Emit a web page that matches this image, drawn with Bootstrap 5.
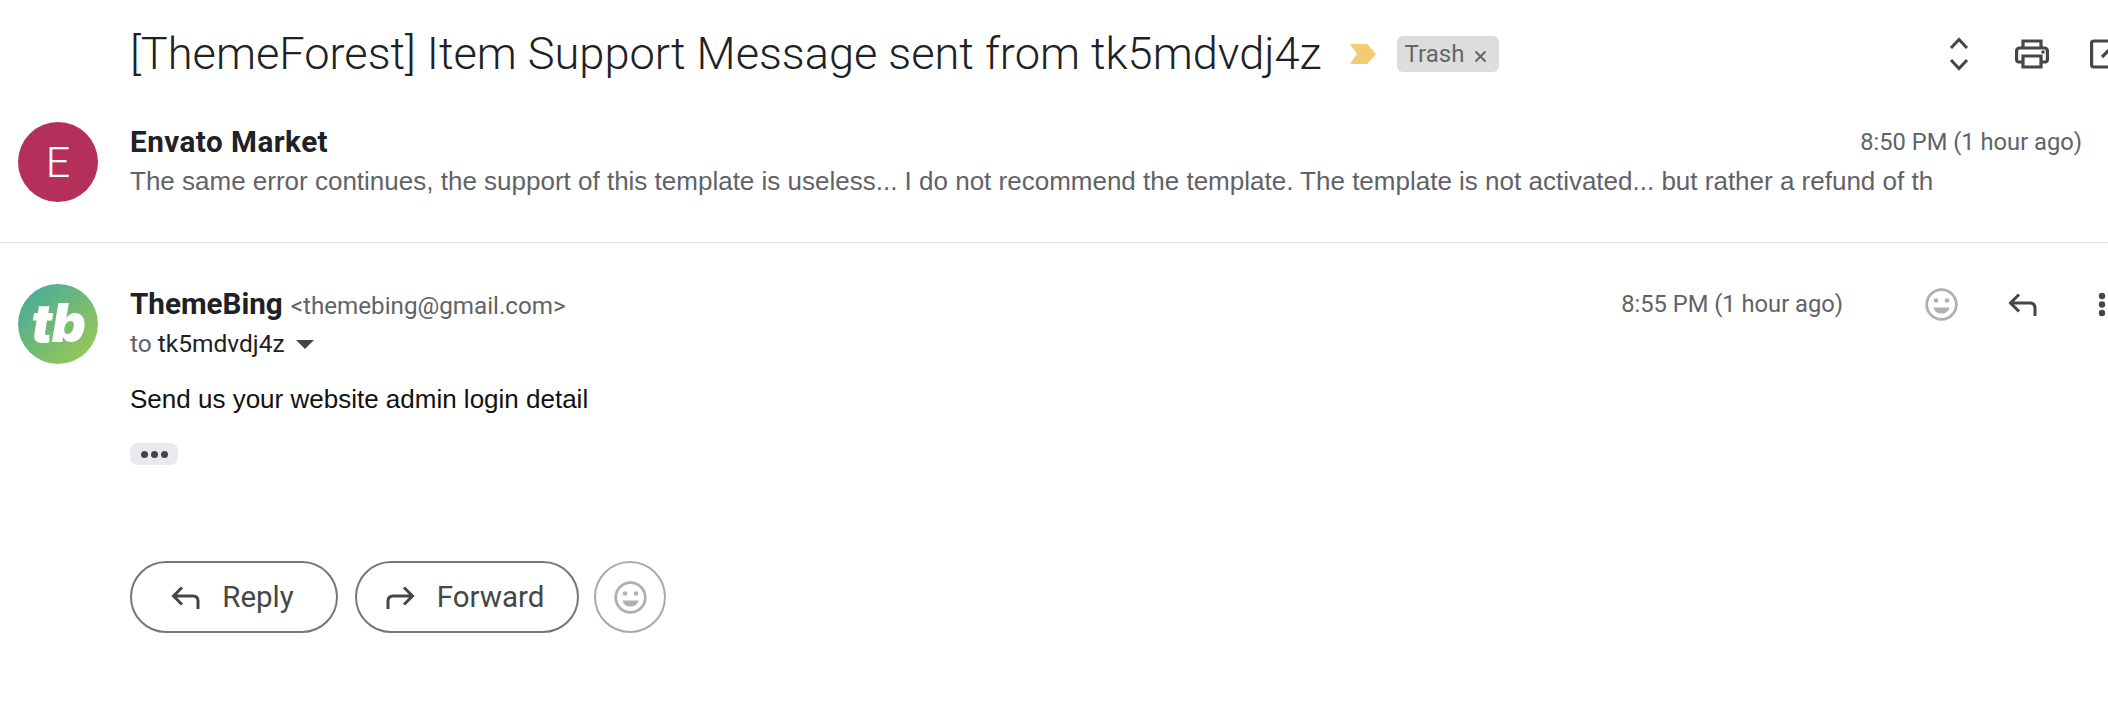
<!DOCTYPE html>
<html lang="en">
<head>
<meta charset="utf-8">
<title>Email</title>
<link href="https://cdn.jsdelivr.net/npm/bootstrap@5.3.0/dist/css/bootstrap.min.css" rel="stylesheet">
<style>
html,body{margin:0;background:#fff;overflow:hidden}
.mail-page{width:2108px;height:702px;overflow:hidden;font-family:Roboto,"Liberation Sans",sans-serif;color:#202124}
.subject-row{height:108px;padding-left:130px;padding-top:25px}
.subject-text{font-family:Roboto,sans-serif;font-weight:300;font-size:45.15px;line-height:58px;margin:0;white-space:nowrap;color:#202124}
.subject-side{height:58px}
.tag-arrow{margin-left:28px;width:26px;height:20px;flex:none}
.trash-chip{margin-left:21px;width:102px;height:36px;background:#ddd;border-radius:6px;color:#666;font-size:24px;flex:none;padding-left:8px;gap:10px}
.chip-x{width:13px;height:13px;margin-top:4px}
.top-actions{margin-left:auto;width:159px;flex:none;height:58px;gap:41px}
.updown-icon{margin-right:5px}
.avatar-disc{width:80px;height:80px;border-radius:50%;flex:none;margin-left:18px;margin-right:32px}
.avatar-e{background:#b52f5b;color:#fff;font-size:43px;font-weight:300}
.avatar-tb{background:linear-gradient(135deg,#3fa8a0,#a3cc4e);color:#fff;font-size:53px;font-weight:900;font-style:italic;letter-spacing:-1px;font-family:Inter,sans-serif}
.preview-row{height:135px;padding-top:14px;border-bottom:1px solid #e0e0e0}
.sender-name{font-size:29.6px;font-weight:700;color:#202124;line-height:36px}
.name-wide{letter-spacing:.5px}
.time-label{font-size:23.7px;color:#5f6368;line-height:36px;white-space:nowrap}
.preview-head{width:1952px;padding-top:2px}
.snippet-text{font-family:"Liberation Sans",sans-serif;font-size:26px;color:#5f6368;line-height:36px;margin-top:3px;white-space:nowrap;overflow:hidden;width:1803px}
.message-row{padding-top:41px}
.sender-mail{font-size:24.2px;color:#5f6368;margin-left:4px}
.sender-line{line-height:36px}
.first-line{padding-top:2px}
.to-line{font-size:24.5px;color:#5f6368;line-height:36px;margin-top:-1px}
.to-line b{font-weight:400;color:#202124}
.to-caret{width:0;height:0;border-left:9px solid transparent;border-right:9px solid transparent;border-top:9px solid #444;display:inline-block;margin-left:11px;vertical-align:3px}
.body-line{font-family:"Liberation Sans",sans-serif;font-size:26px;color:#111;line-height:36px;margin-top:19px}
.more-pill{width:48px;height:22px;background:#e8eaed;border-radius:8px;margin-top:26px;gap:3px}
.more-pill i{width:7px;height:7px;border-radius:50%;background:#444;display:block}
.reply-actions{margin-top:96px;gap:17px}
.pill-btn{height:72px;border:2px solid #747775;border-radius:36px;background:#fff;color:#444746;font-size:29.5px;font-family:Roboto,sans-serif;padding:0}
.pill-reply{width:208px;gap:22px;padding-right:3px}
.pill-forward{width:224px;gap:22px;padding-right:4px}
.pill-emoji{width:72px;border-color:#aaa;margin-left:-2px}
.msg-main{width:1713px;flex:none}
.msg-actions{margin-left:82px;flex:none;gap:50px;height:36px}
.msg-dots{margin-left:11px}
.msg-col{flex:none}
</style>
</head>
<body>
<div class="mail-page">
  <div class="subject-row d-flex align-items-start">
    <h1 class="subject-text">[ThemeForest] Item Support Message sent from tk5mdvdj4z</h1>
    <div class="subject-side d-flex align-items-center">
      <svg class="tag-arrow" viewBox="0 0 26 20"><path d="M0 0H17L26 10L17 20H0L7 10Z" fill="#f2cb73"/></svg>
      <div class="trash-chip d-flex align-items-center"><span>Trash</span>
        <svg class="chip-x" viewBox="0 0 13 13"><path d="M1.500 1.500L11.500 11.500M11.500 1.500L1.500 11.500" stroke="#666" stroke-width="2"/></svg>
      </div>
    </div>
    <div class="top-actions d-flex align-items-center">
      <svg width="20" height="34" viewBox="0 0 20 34" class="flex-shrink-0 updown-icon"><path d="M2 11L10 2.500L18 11M2 23L10 31.500L18 23" fill="none" stroke="#444746" stroke-width="3"/></svg>
      <svg width="34" height="30" viewBox="0 0 34 30" class="flex-shrink-0"><path fill="none" stroke="#444746" stroke-width="3.200" d="M8 9V2H26V9M8 23H3.500C2.500 23 1.600 22 1.600 21V12C1.600 10 3 9 5 9H29C31 9 32.400 10 32.400 12V21C32.400 22 31.500 23 30.500 23H26M8 17H26V28H8Z"/><circle cx="28" cy="13" r="1.800" fill="#444746"/></svg>
      <svg width="34" height="30" viewBox="0 0 34 30" class="flex-shrink-0"><path fill="none" stroke="#444746" stroke-width="3.200" d="M22 2H4C2.500 2 1.600 3 1.600 4V26C1.600 27 2.500 28 4 28H26C27.500 28 28.400 27 28.400 26V14M12 18L30 0"/></svg>
    </div>
  </div>

  <div class="preview-row d-flex">
    <div class="avatar-disc avatar-e d-flex align-items-center justify-content-center">E</div>
    <div class="flex-grow-1">
      <div class="preview-head d-flex justify-content-between">
        <span class="sender-name name-wide">Envato Market</span>
        <span class="time-label">8:50 PM (1 hour ago)</span>
      </div>
      <div class="snippet-text">The same error continues, the support of this template is useless... I do not recommend the template. The template is not activated... but rather a refund of th</div>
    </div>
  </div>

  <div class="message-row d-flex">
    <div class="avatar-disc avatar-tb d-flex align-items-center justify-content-center">tb</div>
    <div class="msg-col">
      <div class="first-line d-flex">
        <div class="msg-main d-flex justify-content-between">
          <div class="sender-line"><span class="sender-name">ThemeBing</span> <span class="sender-mail">&lt;themebing@gmail.com&gt;</span></div>
          <span class="time-label">8:55 PM (1 hour ago)</span>
        </div>
        <div class="msg-actions d-flex align-items-center">
          <svg width="33" height="33" viewBox="0 0 33 33" class="flex-shrink-0"><circle cx="16.500" cy="16.500" r="14.800" fill="none" stroke="#b0b0b0" stroke-width="2.800"/><circle cx="11" cy="12.500" r="2.300" fill="#b0b0b0"/><circle cx="22" cy="12.500" r="2.300" fill="#b0b0b0"/><path d="M8.500 19.500H24.500C23.500 23.500 20.500 25.500 16.500 25.500S9.500 23.500 8.500 19.500Z" fill="#b0b0b0"/></svg>
          <svg width="29" height="23" viewBox="0 0 29 23" class="flex-shrink-0"><path d="M27 23V15C27 11.500 25 10 22 10H3M11 1.500L2.500 10L11 18.500" fill="none" stroke="#444746" stroke-width="3"/></svg>
          <svg width="8" height="25" viewBox="0 0 8 25" class="flex-shrink-0 msg-dots"><circle cx="4" cy="4" r="3.200" fill="#444746"/><circle cx="4" cy="12.500" r="3.200" fill="#444746"/><circle cx="4" cy="21" r="3.200" fill="#444746"/></svg>
        </div>
      </div>
      <div class="to-line">to <b>tk5mdvdj4z</b><span class="to-caret"></span></div>
      <div class="body-line">Send us your website admin login detail</div>
      <div class="more-pill d-flex align-items-center justify-content-center"><i></i><i></i><i></i></div>
      <div class="reply-actions d-flex">
        <button type="button" class="btn pill-btn pill-reply d-flex align-items-center justify-content-center">
          <svg width="29" height="23" viewBox="0 0 29 23"><path d="M27 23V15C27 11.500 25 10 22 10H3M11 1.500L2.500 10L11 18.500" fill="none" stroke="#444746" stroke-width="3"/></svg><span>Reply</span>
        </button>
        <button type="button" class="btn pill-btn pill-forward d-flex align-items-center justify-content-center">
          <svg width="29" height="23" viewBox="0 0 29 23"><path d="M2 23V15C2 11.500 4 10 7 10H26M18 1.500L26.500 10L18 18.500" fill="none" stroke="#444746" stroke-width="3"/></svg><span>Forward</span>
        </button>
        <button type="button" class="btn pill-btn pill-emoji d-flex align-items-center justify-content-center" aria-label="React">
          <svg width="33" height="33" viewBox="0 0 33 33"><circle cx="16.500" cy="16.500" r="14.800" fill="none" stroke="#b0b0b0" stroke-width="2.800"/><circle cx="11" cy="12.500" r="2.300" fill="#b0b0b0"/><circle cx="22" cy="12.500" r="2.300" fill="#b0b0b0"/><path d="M8.500 19.500H24.500C23.500 23.500 20.500 25.500 16.500 25.500S9.500 23.500 8.500 19.500Z" fill="#b0b0b0"/></svg>
        </button>
      </div>
    </div>
  </div>
</div>
<script src="https://cdn.jsdelivr.net/npm/bootstrap@5.3.0/dist/js/bootstrap.bundle.min.js"></script>
</body>
</html>
